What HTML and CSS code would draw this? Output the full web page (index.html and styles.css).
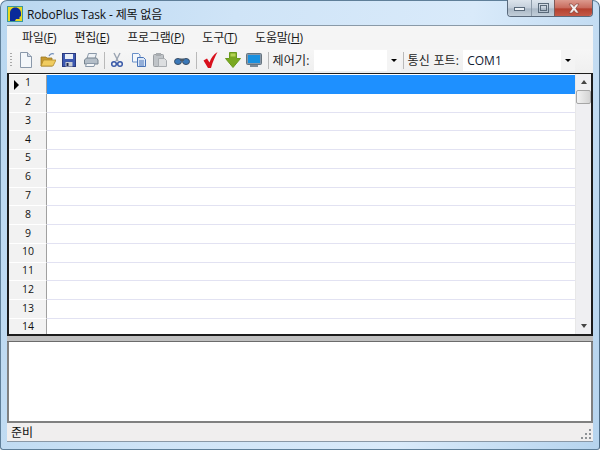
FILE: index.html
```html
<!DOCTYPE html>
<html lang="ko">
<head>
<meta charset="utf-8">
<title>RoboPlus Task</title>
<link rel="stylesheet" href="styles.css">
</head>
<body>
<div class="window">
  <div class="titlebar">
    <svg class="appicon" width="16" height="16" viewBox="0 0 16 16"><rect x="0.5" y="0.5" width="15" height="15" fill="#e8d820" stroke="#3a9a9a"/><path d="M3 15V7c0-3.500 2.500-5.500 5.500-5.500S14 4 14 7v3l-1.500 1v2H9l-1 2z" fill="#0a2a9a"/></svg>
    <span class="title">RoboPlus Task - 제목 없음</span>
    <div class="caption">
      <div class="capbtn min"><svg width="13" height="8" viewBox="0 0 13 8"><rect x="1.500" y="3.500" width="10" height="3" fill="#eef3f8" stroke="#5a6a7a"/></svg></div>
      <div class="capbtn max"><svg width="13" height="11" viewBox="0 0 13 11"><rect x="1.500" y="0.500" width="10" height="9" fill="none" stroke="#5a6a7a"/><rect x="3.500" y="2.500" width="6" height="5" fill="none" stroke="#5a6a7a"/></svg></div>
      <div class="capbtn close"><svg width="14" height="11" viewBox="0 0 14 11"><path d="M2 1h3l2 2.500L9 1h3L8.800 5.500 12 10H9L7 7.500 5 10H2l3.200-4.500z" fill="#f4efee" stroke="#7a3a32" stroke-width="0.600"/></svg></div>
    </div>
  </div>
  <div class="client">
    <div class="menubar">
      <span class="menuitem">파일(<u>F</u>)</span>
      <span class="menuitem">편집(<u>E</u>)</span>
      <span class="menuitem">프로그램(<u>P</u>)</span>
      <span class="menuitem">도구(<u>T</u>)</span>
      <span class="menuitem">도움말(<u>H</u>)</span>
    </div>
    <div class="toolbar">
      <span class="grip"></span>
      <svg class="tool" width="16" height="16" viewBox="0 0 16 16"><path d="M2.500 0.500h7l4 4v11h-11z" fill="#f4f7fa" stroke="#8a98aa"/><path d="M9.500 0.500v4h4" fill="#d0d8e4" stroke="#8a98aa"/></svg>
      <svg class="tool" width="16" height="16" viewBox="0 0 16 16"><path d="M1 5h5l1 1h5v8H1z" fill="#c89a30" stroke="#9a7824" stroke-width="0.800"/><path d="M1 14l2.500-6H16l-3 6z" fill="#f0cc60" stroke="#b08a2c" stroke-width="0.800"/><path d="M9 4c1-2 3-3 5-2" fill="none" stroke="#6a8ab8" stroke-width="1.200"/></svg>
      <svg class="tool" width="16" height="16" viewBox="0 0 16 16"><rect x="1.500" y="1.500" width="13" height="13" fill="#3c58b0" stroke="#2a3a80"/><rect x="4" y="2" width="8" height="5" fill="#e8eef8"/><rect x="4.500" y="10" width="7" height="4.500" fill="#c8ccd4"/><rect x="5.500" y="11" width="2" height="3" fill="#222a50"/></svg>
      <svg class="tool" width="16" height="16" viewBox="0 0 16 16"><path d="M5.500 1.500h8l-1.500 5H4z" fill="#eef2f6" stroke="#8a98a8"/><path d="M1.500 8l2-2h10l1.500 2v4H1.500z" fill="#b4bec8" stroke="#76838f"/><path d="M3.500 11.500h8.500l-1 3H2.500z" fill="#f4f6f8" stroke="#8a98a8"/></svg>
      <span class="sep"></span>
      <svg class="tool" width="16" height="16" viewBox="0 0 16 16"><path d="M5 1l4 8M11 1L7 9" stroke="#9aa4b2" stroke-width="1.400" fill="none"/><circle cx="5" cy="12" r="2.300" fill="none" stroke="#3a5aa8" stroke-width="1.500"/><circle cx="11" cy="12" r="2.300" fill="none" stroke="#3a5aa8" stroke-width="1.500"/></svg>
      <svg class="tool" width="16" height="16" viewBox="0 0 16 16"><path d="M1.500 1.500h6l1.500 1.500v7H1.500z" fill="#f4f8fc" stroke="#6a90c8"/><path d="M6.500 5.500h6l2 2v7h-8z" fill="#dce8f8" stroke="#4a74b8"/><path d="M8 9h5M8 11h5M8 13h5" stroke="#4a74b8"/></svg>
      <svg class="tool" width="16" height="16" viewBox="0 0 16 16"><rect x="1.500" y="2.500" width="10" height="12" rx="1" fill="#c0c4c8" stroke="#9a9ea2"/><rect x="4" y="1" width="5" height="3" fill="#a8acb0"/><path d="M6.500 6.500h6l2 2v6h-8z" fill="#dcdee0" stroke="#a8acb0"/></svg>
      <svg class="tool" width="16" height="16" viewBox="0 0 16 16"><ellipse cx="4" cy="9.500" rx="3.500" ry="3" fill="#3a78b8" stroke="#3a4c62"/><ellipse cx="12" cy="9.500" rx="3.500" ry="3" fill="#3a78b8" stroke="#3a4c62"/><rect x="6" y="6.500" width="4" height="2.500" fill="#4a5a6a"/></svg>
      <span class="sep wide"></span>
      <svg class="tool" width="16" height="16" viewBox="0 0 16 16"><path d="M0.500 8.500L4 6.500l2.500 4C8 6 10.500 2.500 14.500 0 12.500 4 9.500 10 8 16H5z" fill="#d8101c"/></svg>
      <svg class="tool" width="16" height="16" viewBox="0 0 16 16"><path d="M4.500 0.500h7v6h4L8 15.500 0.500 6.500h4z" fill="#7aa820" stroke="#6a9a1c"/><path d="M5.500 1.500h5v3h-5z" fill="#b4d254"/></svg>
      <svg class="tool" width="16" height="16" viewBox="0 0 16 16"><rect x="0.500" y="1.500" width="15" height="11" rx="1" fill="#8898a8" stroke="#66747f"/><rect x="2" y="3" width="12" height="8" fill="#1890e0"/><rect x="4" y="13" width="8" height="2" fill="#7a8a98"/></svg>
      <span class="sep"></span>
      <span class="label">제어기:</span>
      <div class="combo controller"><span class="combotext"></span><span class="arrow"></span></div>
      <span class="sep"></span>
      <span class="label">통신 포트:</span>
      <div class="combo port"><span class="combotext">COM1</span><span class="arrow"></span></div>
    </div>
    <div class="gridframe">
      <div class="rows">
        <div class="row selected"><span class="rownum"><span class="marker"></span>1</span><span class="cell"></span></div>
        <div class="row"><span class="rownum">2</span><span class="cell"></span></div>
        <div class="row"><span class="rownum">3</span><span class="cell"></span></div>
        <div class="row"><span class="rownum">4</span><span class="cell"></span></div>
        <div class="row"><span class="rownum">5</span><span class="cell"></span></div>
        <div class="row"><span class="rownum">6</span><span class="cell"></span></div>
        <div class="row"><span class="rownum">7</span><span class="cell"></span></div>
        <div class="row"><span class="rownum">8</span><span class="cell"></span></div>
        <div class="row"><span class="rownum">9</span><span class="cell"></span></div>
        <div class="row"><span class="rownum">10</span><span class="cell"></span></div>
        <div class="row"><span class="rownum">11</span><span class="cell"></span></div>
        <div class="row"><span class="rownum">12</span><span class="cell"></span></div>
        <div class="row"><span class="rownum">13</span><span class="cell"></span></div>
        <div class="row"><span class="rownum">14</span><span class="cell"></span></div>
      </div>
      <div class="scrollbar">
        <span class="scrollup"></span>
        <span class="thumb"></span>
        <span class="scrolltrack"></span>
        <span class="scrolldown"></span>
      </div>
    </div>
    <div class="splitter"></div>
    <div class="output"></div>
    <div class="statusbar">
      <span class="statustext">준비</span>
      <svg class="sizegrip" width="11" height="11" viewBox="0 0 11 11" fill="#8e9296"><rect x="8" y="0" width="2" height="2"/><rect x="4" y="4" width="2" height="2"/><rect x="8" y="4" width="2" height="2"/><rect x="0" y="8" width="2" height="2"/><rect x="4" y="8" width="2" height="2"/><rect x="8" y="8" width="2" height="2"/></svg>
    </div>
  </div>
</div>
</body>
</html>
```

FILE: styles.css
```css
* { box-sizing: border-box; }
html, body { margin: 0; padding: 0; }
body { width: 600px; height: 450px; overflow: hidden; font-family: "Open Sans", "Noto Sans CJK KR", sans-serif; font-size: 12px; color: #000; }
.window {
  width: 600px; height: 450px; display: flex; flex-direction: column;
  padding: 0 6px 7px 6px; border: 1px solid #5f7f99; border-radius: 7px 7px 3px 3px;
  background: linear-gradient(100deg, #b9d7f0 0%, #cfe4f7 35%, #d9eafa 70%, #b6d4ee 100%);
  border-right-color: #4c6a84;
}
.titlebar { flex: 0 0 24px; display: flex; align-items: flex-start; }
.appicon { margin-top: 5px; margin-right: 4px; flex: none; }
.title { margin-top: 5px; line-height: 17px; font-size: 12px; color: #111; white-space: nowrap; letter-spacing: -0.15px; }
.caption { margin-left: auto; margin-top: -1px; display: flex; height: 17px; border: 1px solid #5a6a7c; border-top: 0; border-radius: 0 0 4px 4px; overflow: hidden; }
.capbtn { height: 16px; display: flex; align-items: center; justify-content: center; }
.min { width: 24px; background: linear-gradient(#dce4ec 0%, #c4cfdb 50%, #aab8c6 55%, #c2ced9 100%); border-right: 1px solid #8c9aa8; }
.max { width: 23px; background: linear-gradient(#dce4ec 0%, #c4cfdb 50%, #aab8c6 55%, #c2ced9 100%); border-right: 1px solid #7e5a58; }
.close { width: 37px; background: linear-gradient(#dc9a8e 0%, #c86a5c 50%, #b4402e 55%, #c45a48 100%); }
.client { flex: 1; display: flex; flex-direction: column; background: #f0f0f0; border-top: 1px solid #8a9aa8; border-bottom: 1px solid #8a98a6; min-height: 0; }
.menubar { flex: 0 0 23px; display: flex; align-items: center; padding: 1px 0 0 6px; background: #f5f5f5; }
.menuitem { padding: 0 9px; line-height: 18px; color: #1a1a1a; font-size: 12px; letter-spacing: -0.2px; white-space: nowrap; }
.toolbar { flex: 0 0 24px; display: flex; align-items: center; padding: 0 0 2px 3px; background: linear-gradient(#f6f6f6, #efefef); }
.grip { width: 2px; height: 15px; margin-right: 6px; background-image: linear-gradient(#a9a9a9 50%, transparent 50%); background-size: 2px 3px; }
.tool { flex: none; margin-right: 5.500px; }
.sep { width: 1px; height: 17px; background: #b9b9b9; margin: 0 4px 0 0; flex: none; }
.sep.wide { margin: 0 6px 0 1px; }
.label { white-space: nowrap; font-size: 12px; margin: 0 4px 0 0; color: #222; letter-spacing: 0.2px; }
.combo { height: 21px; background: #fff; display: flex; align-items: center; flex: none; }
.controller { width: 87px; margin-right: 2px; }
.port { width: 112px; }
.combotext { flex: 1; padding-left: 4px; font-size: 12px; color: #123; }
.arrow { width: 14px; height: 21px; background: #f4f4f4; display: flex; align-items: center; justify-content: center; flex: none; }
.arrow::before { content: ""; border-left: 3px solid transparent; border-right: 3px solid transparent; border-top: 3px solid #000; }
.gridframe { height: 263px; flex: none; display: flex; border: 2px solid #1c1c1c; border-top-width: 1px; background: #fff; overflow: hidden; }
.rows { flex: 1; padding-top: 1px; min-width: 0; }
.row { height: 18.77px; display: flex; }
.rownum { flex: 0 0 38px; background: #f2f2f2; border-right: 1px solid #a0a0a0; border-bottom: 1px solid #fff; display: flex; align-items: center; justify-content: center; font-size: 10.500px; position: relative; color: #111; padding: 0 0 3px 1px; }
.marker { position: absolute; left: 5px; top: 5px; border-left: 5px solid #000; border-top: 5px solid transparent; border-bottom: 5px solid transparent; }
.cell { flex: 1; border-bottom: 1px solid #e2e2f2; }
.selected .cell { background: #1e90ff; border-bottom-color: #1e90ff; }
.scrollbar { flex: 0 0 16px; display: flex; flex-direction: column; background: #efeff2; border-left: 1px solid #e8e8e8; }
.scrollup, .scrolldown { height: 16px; flex: none; display: flex; align-items: center; justify-content: center; }
.scrollup::before { content: ""; border-left: 3.500px solid transparent; border-right: 3.500px solid transparent; border-bottom: 4px solid #444; }
.scrolldown::before { content: ""; border-left: 3.500px solid transparent; border-right: 3.500px solid transparent; border-top: 4px solid #444; }
.thumb { height: 14px; flex: none; background: linear-gradient(90deg, #f2f2f2, #d4d4d4); border: 1px solid #a6a6a6; border-radius: 2px; }
.scrolltrack { flex: 1; }
.splitter { flex: 0 0 6px; background: #c0c0c0; border-bottom: 1px solid #6c6c6c; }
.output { flex: 0 0 81px; background: #fff; border-left: 2px solid #808080; border-right: 2px solid #808080; border-bottom: 2px solid #808080; }
.statusbar { flex: 1; display: flex; align-items: center; justify-content: space-between; background: #f0eeee; padding: 0 1px 0 4px; min-height: 0; }
.statustext { font-size: 12px; color: #111; }
.sizegrip { align-self: flex-end; margin-bottom: 1px; }
```
